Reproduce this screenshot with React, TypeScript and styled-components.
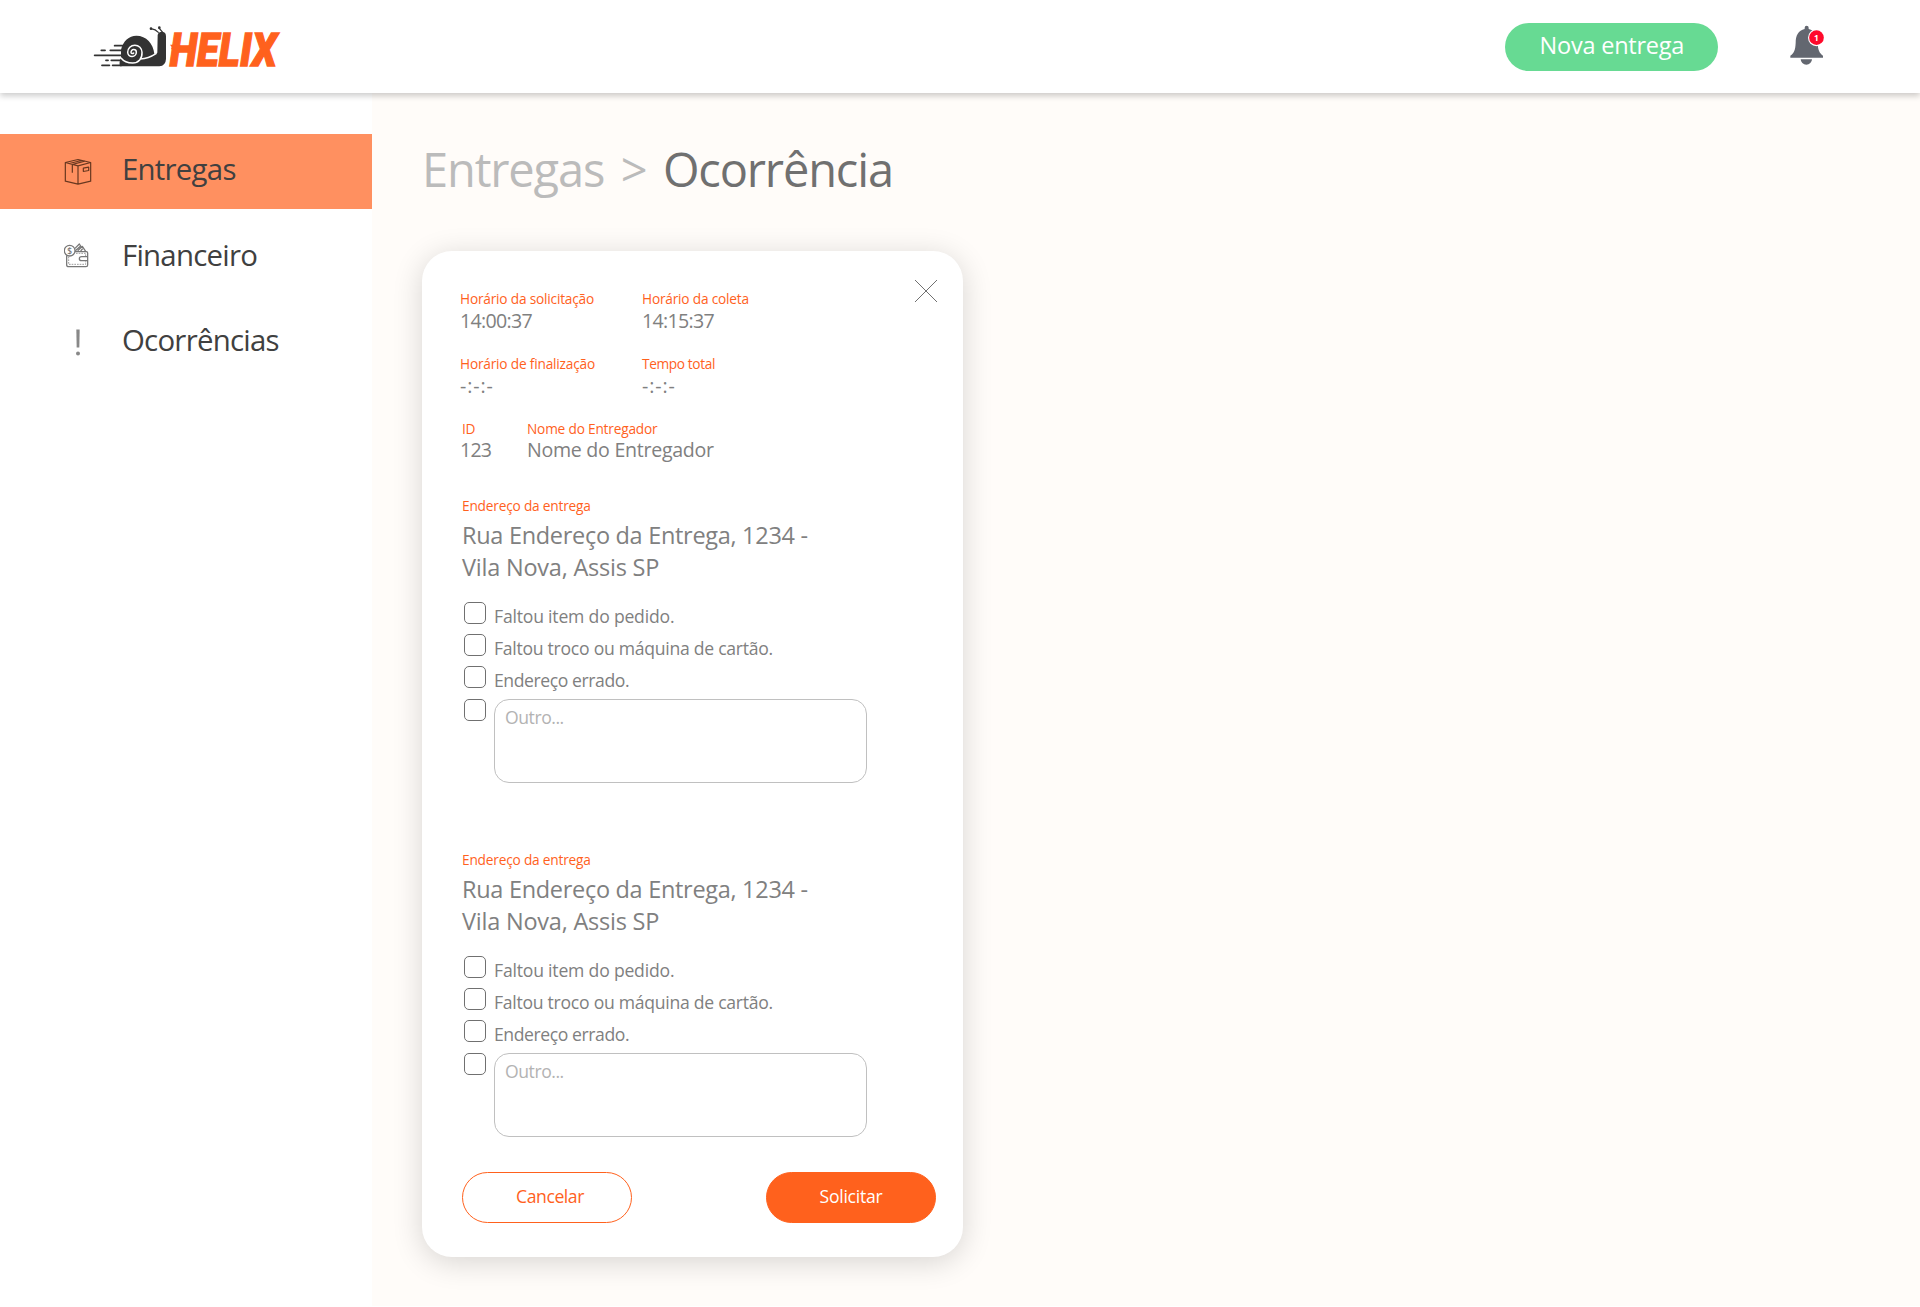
import React from "react";
import styled, { createGlobalStyle } from "styled-components";

const GlobalStyle = createGlobalStyle`
  *, *::before, *::after { box-sizing: border-box; }
  body {
    margin: 0;
    background: #fff;
    font-family: "Open Sans", "Noto Sans", sans-serif;
  }
  button { font-family: inherit; cursor: pointer; }
`;

const Page = styled.div`
  display: flex;
  flex-direction: column;
  width: 1920px;
  height: 1307px;
  overflow: hidden;
`;

const Header = styled.header`
  position: relative;
  z-index: 1;
  display: flex;
  align-items: center;
  flex: none;
  height: 93px;
  padding: 1px 94px 0 92px;
  background: #fff;
  box-shadow: 0 3px 6px rgba(0, 0, 0, 0.2);
`;

const LogoSvg = styled.svg`
  width: 190px;
  height: 43.33px;
  overflow: visible;
`;

const NewDelivery = styled.button`
  width: 213px;
  height: 48px;
  margin-left: auto;
  padding: 0 0 4px;
  border: 0;
  border-radius: 24px;
  background: #67da93;
  color: #fff;
  font-size: 23.5px;
  letter-spacing: -0.23px;
`;

const BellSvg = styled.svg`
  width: 38.33px;
  height: 43.33px;
  margin-left: 69.3px;
`;

const Body = styled.div`
  display: flex;
  height: 1213px;
`;

const Sidebar = styled.nav`
  display: flex;
  flex-direction: column;
  gap: 10.5px;
  width: 372px;
  padding-top: 41px;
  background: #fff;
`;

const NavItem = styled.a<{ $active?: boolean }>`
  display: flex;
  align-items: center;
  gap: 30px;
  height: 75px;
  padding-left: 64px;
  background: ${(p) => (p.$active ? "#ff9060" : "transparent")};
  color: #404040;
`;

const NavIcon = styled.svg`
  flex: none;
  width: 28px;
  height: 30px;
  fill: none;
`;

const NavLabel = styled.span`
  padding-bottom: 5px;
  font-size: 29.4px;
  line-height: 40px;
  letter-spacing: -0.75px;
`;

const Main = styled.main`
  flex: 1;
  padding: 44px 0 0 50px;
  background: #fffcf9;
`;

const Breadcrumb = styled.h1`
  display: flex;
  gap: 16.5px;
  margin: 0 0 50px;
  font-size: 47px;
  font-weight: 400;
  line-height: 64px;
  letter-spacing: -1.15px;
  color: #bbb;
`;

const Current = styled.span`
  color: #707070;
`;

const Card = styled.section`
  width: 541px;
  height: 1006px;
  padding: 0 26px 34px 38px;
  border-radius: 30px;
  background: #fff;
  box-shadow: 0 5px 30px rgba(0, 0, 0, 0.16);
`;

const CardTop = styled.div`
  display: flex;
  justify-content: space-between;
  align-items: flex-start;
`;

const Info = styled.div`
  display: flex;
  flex-direction: column;
  gap: 21px;
  padding-top: 39px;
`;

const InfoRow = styled.div<{ $first: number }>`
  display: grid;
  grid-template-columns: ${(p) => p.$first}px auto;
`;

const CloseButton = styled.button`
  display: flex;
  margin-top: 29px;
  padding: 0;
  border: 0;
  background: none;
`;

const Label = styled.div<{ $indent?: number; $spacing?: number }>`
  padding-left: ${(p) => p.$indent ?? 0}px;
  color: #ff611d;
  font-size: 13.7px;
  line-height: 18px;
  letter-spacing: ${(p) => p.$spacing ?? -0.2}px;
  white-space: nowrap;
`;

const Value = styled.div<{ $spacing: number; $height?: number }>`
  color: #808080;
  font-size: 19.6px;
  line-height: ${(p) => p.$height ?? 26}px;
  letter-spacing: ${(p) => p.$spacing}px;
  white-space: nowrap;
`;

const Delivery = styled.div<{ $top: number }>`
  margin-top: ${(p) => p.$top}px;
  padding-left: 2px;
`;

const Address = styled.p`
  margin: 4px 0 19px;
  color: #808080;
  font-size: 23.5px;
  line-height: 32px;
  letter-spacing: -0.3px;
`;

const AddressCity = styled.span`
  letter-spacing: -0.22px;
`;

const Option = styled.label`
  display: flex;
  align-items: flex-start;
  gap: 8px;
  height: 32px;
  padding-left: 2px;
`;

const OtherOption = styled(Option)`
  height: 84px;
  margin-top: 1px;
`;

const Checkbox = styled.input.attrs({ type: "checkbox" })`
  appearance: none;
  flex: none;
  width: 22px;
  height: 22px;
  margin: 0;
  border: 1px solid #707070;
  border-radius: 5px;
  background: #fff;
`;

const OptionText = styled.span<{ $spacing: number }>`
  color: #808080;
  font-size: 17.6px;
  line-height: 28px;
  letter-spacing: ${(p) => p.$spacing}px;
  white-space: nowrap;
`;

const OtherText = styled.textarea`
  width: 373px;
  height: 84px;
  padding: 5px 10px;
  border: 1px solid #c0c0c0;
  border-radius: 15px;
  outline: 0;
  resize: none;
  font: 17.6px/24px "Open Sans", "Noto Sans", sans-serif;
  letter-spacing: -0.45px;
  &::placeholder { color: #b3b3b3; opacity: 1; }
`;

const Actions = styled.div`
  display: flex;
  justify-content: space-between;
  margin-top: 35px;
  padding: 0 1px 0 2px;
`;

const ActionButton = styled.button<{ $primary?: boolean }>`
  width: 170px;
  height: 51px;
  padding: ${(p) => (p.$primary ? "0 0 3px" : "0 0 3px 6px")};
  border: 1px solid #ff611d;
  border-radius: 25.5px;
  background: ${(p) => (p.$primary ? "#ff611d" : "#fff")};
  color: ${(p) => (p.$primary ? "#fff" : "#ff611d")};
  font-size: 17.6px;
  letter-spacing: ${(p) => (p.$primary ? -0.25 : -0.45)}px;
`;

function Logo() {
  return (
    <LogoSvg viewBox="36 46 570 130" aria-label="Helix">
      <path
        fill="#333"
        d="M120 170C117 161 119 152 123 144V120C129 94 147 78 169 78C199 78 220 102 223 133L232 129L233 76Q235 66 247 66Q258 67 258 80V148Q257 168 238 170Z"
      />
      <path fill="none" stroke="#333" strokeWidth="5.5" strokeLinecap="round" d="M44 137H124M64 122H75M91 122H126M104 108H128M78 152H84M94 152H124M66 167H88M98 167H124" />
      <path fill="none" stroke="#333" strokeWidth="3.5" strokeLinecap="round" d="M213 57Q227 59 235 68M237 55L248 68" />
      <circle cx="213" cy="57" r="4" fill="#333" />
      <circle cx="238" cy="54" r="4" fill="#333" />
      <path
        fill="none"
        stroke="#fff"
        strokeWidth="4.5"
        strokeLinecap="round"
        d="M161 130A4.5 4.5 0 0 1 153 128A8 8 0 0 1 169 127A13 13 0 0 1 143 128A21.5 21.5 0 0 1 186 128C187 147 176 160 158 160C141 160 130 154 123 145"
      />
      <path fill="none" stroke="#fff" strokeWidth="4.5" d="M181 148Q205 147 228 132V80" />
      <text
        x="269"
        y="169"
        textLength="322"
        lengthAdjust="spacingAndGlyphs"
        fill="#ff611d"
        stroke="#ff611d"
        strokeWidth="4"
        fontFamily="Roboto, sans-serif"
        fontSize="141"
        fontWeight="900"
        fontStyle="italic"
      >
        HELIX
      </text>
      <path fill="#ff611d" d="M270 105H290L286 119H273L275 112Z" />
    </LogoSvg>
  );
}

function Bell() {
  return (
    <BellSvg viewBox="925 76 115 130">
      <path fill="#636770" d="M975 88V84a6 6 0 0 1 12 0V88C1006 92 1014 107 1014 130C1015 152 1019 160 1030 168V174H932V168C944 160 947 150 948 130C948 107 956 92 975 88ZM963 179H997a17 16 0 0 1-34 0Z" />
      <circle cx="1010.5" cy="114" r="25.5" fill="#fff" />
      <circle cx="1010.5" cy="114" r="22" fill="#ff0a2b" />
      <text x="1010" y="123" textAnchor="middle" fill="#fff" fontSize="25" fontWeight="700" fontFamily="Open Sans, sans-serif">1</text>
    </BellSvg>
  );
}

function BoxIcon() {
  return (
    <NavIcon viewBox="42 34.5 84 90" stroke="#693820" strokeWidth="3.6" strokeLinejoin="round">
      <path d="M46 51L84 42L122 51V107L84 116L46 107ZM46 51L84 61L122 51M84 61V116M67 82V57L104 47M58 54L94 45" />
      <path d="M100 68L116 65V75L100 78Z" />
    </NavIcon>
  );
}

function WalletIcon() {
  return (
    <NavIcon viewBox="42 36 84 90" stroke="#777" strokeWidth="3.8" strokeLinejoin="round">
      <path d="M74 65H109Q113 65 113 69V105Q113 110 108 110H56Q50 110 50 105V76M113 80H95Q88 80 88 86T95 92H113M75 55L88 42L92 48L76 62M83 62L97 49L107 64M92 63L98 56" />
      <path strokeWidth="2.2" strokeDasharray="5 3" d="M56 80V103H107V94M78 70H107V78" />
      <circle cx="59" cy="62" r="16" fill="#fff" />
      <text x="59" y="71" textAnchor="middle" fill="#777" stroke="none" fontSize="25" fontWeight="600" fontFamily="Open Sans, sans-serif">$</text>
    </NavIcon>
  );
}

function ExclamationIcon() {
  return (
    <NavIcon viewBox="192 622.5 84 90">
      <path fill="#888" d="M229 627H239L238 681H230Z" />
      <circle cx="234" cy="699" r="6" fill="#888" />
    </NavIcon>
  );
}

const options = [
  { text: "Faltou item do pedido.", spacing: -0.2 },
  { text: "Faltou troco ou máquina de cartão.", spacing: -0.27 },
  { text: "Endereço errado.", spacing: -0.42 },
];

function DeliveryForm({ top }: { top: number }) {
  return (
    <Delivery $top={top}>
      <Label>Endereço da entrega</Label>
      <Address>
        Rua Endereço da Entrega, 1234 -<br />
        <AddressCity>Vila Nova, Assis SP</AddressCity>
      </Address>
      {options.map((o) => (
        <Option key={o.text}>
          <Checkbox />
          <OptionText $spacing={o.spacing}>{o.text}</OptionText>
        </Option>
      ))}
      <OtherOption as="div">
        <Checkbox />
        <OtherText placeholder="Outro..." />
      </OtherOption>
    </Delivery>
  );
}

export default function App() {
  return (
    <Page>
      <GlobalStyle />
      <Header>
        <Logo />
        <NewDelivery>Nova entrega</NewDelivery>
        <Bell />
      </Header>
      <Body>
        <Sidebar>
          <NavItem $active>
            <BoxIcon />
            <NavLabel>Entregas</NavLabel>
          </NavItem>
          <NavItem>
            <WalletIcon />
            <NavLabel>Financeiro</NavLabel>
          </NavItem>
          <NavItem>
            <ExclamationIcon />
            <NavLabel>Ocorrências</NavLabel>
          </NavItem>
        </Sidebar>
        <Main>
          <Breadcrumb>
            <span>Entregas</span>
            <span>&gt;</span>
            <Current>Ocorrência</Current>
          </Breadcrumb>
          <Card>
            <CardTop>
              <Info>
                <InfoRow $first={182}>
                  <Label>Horário da solicitação</Label>
                  <Label>Horário da coleta</Label>
                  <Value $spacing={-0.68}>14:00:37</Value>
                  <Value $spacing={-0.68}>14:15:37</Value>
                </InfoRow>
                <InfoRow $first={182}>
                  <Label>Horário de finalização</Label>
                  <Label $spacing={-0.37}>Tempo total</Label>
                  <Value $spacing={0.9}>-:-:-</Value>
                  <Value $spacing={0.9}>-:-:-</Value>
                </InfoRow>
                <InfoRow $first={67}>
                  <Label $indent={2}>ID</Label>
                  <Label>Nome do Entregador</Label>
                  <Value $spacing={-0.8} $height={24}>123</Value>
                  <Value $spacing={-0.28} $height={24}>Nome do Entregador</Value>
                </InfoRow>
              </Info>
              <CloseButton aria-label="Fechar">
                <svg width="22" height="22" viewBox="0 0 22 22" stroke="#707070" strokeWidth="1">
                  <path d="M0 0L22 22M22 0L0 22" />
                </svg>
              </CloseButton>
            </CardTop>
            <DeliveryForm top={35} />
            <DeliveryForm top={68} />
            <Actions>
              <ActionButton>Cancelar</ActionButton>
              <ActionButton $primary>Solicitar</ActionButton>
            </Actions>
          </Card>
        </Main>
      </Body>
    </Page>
  );
}
